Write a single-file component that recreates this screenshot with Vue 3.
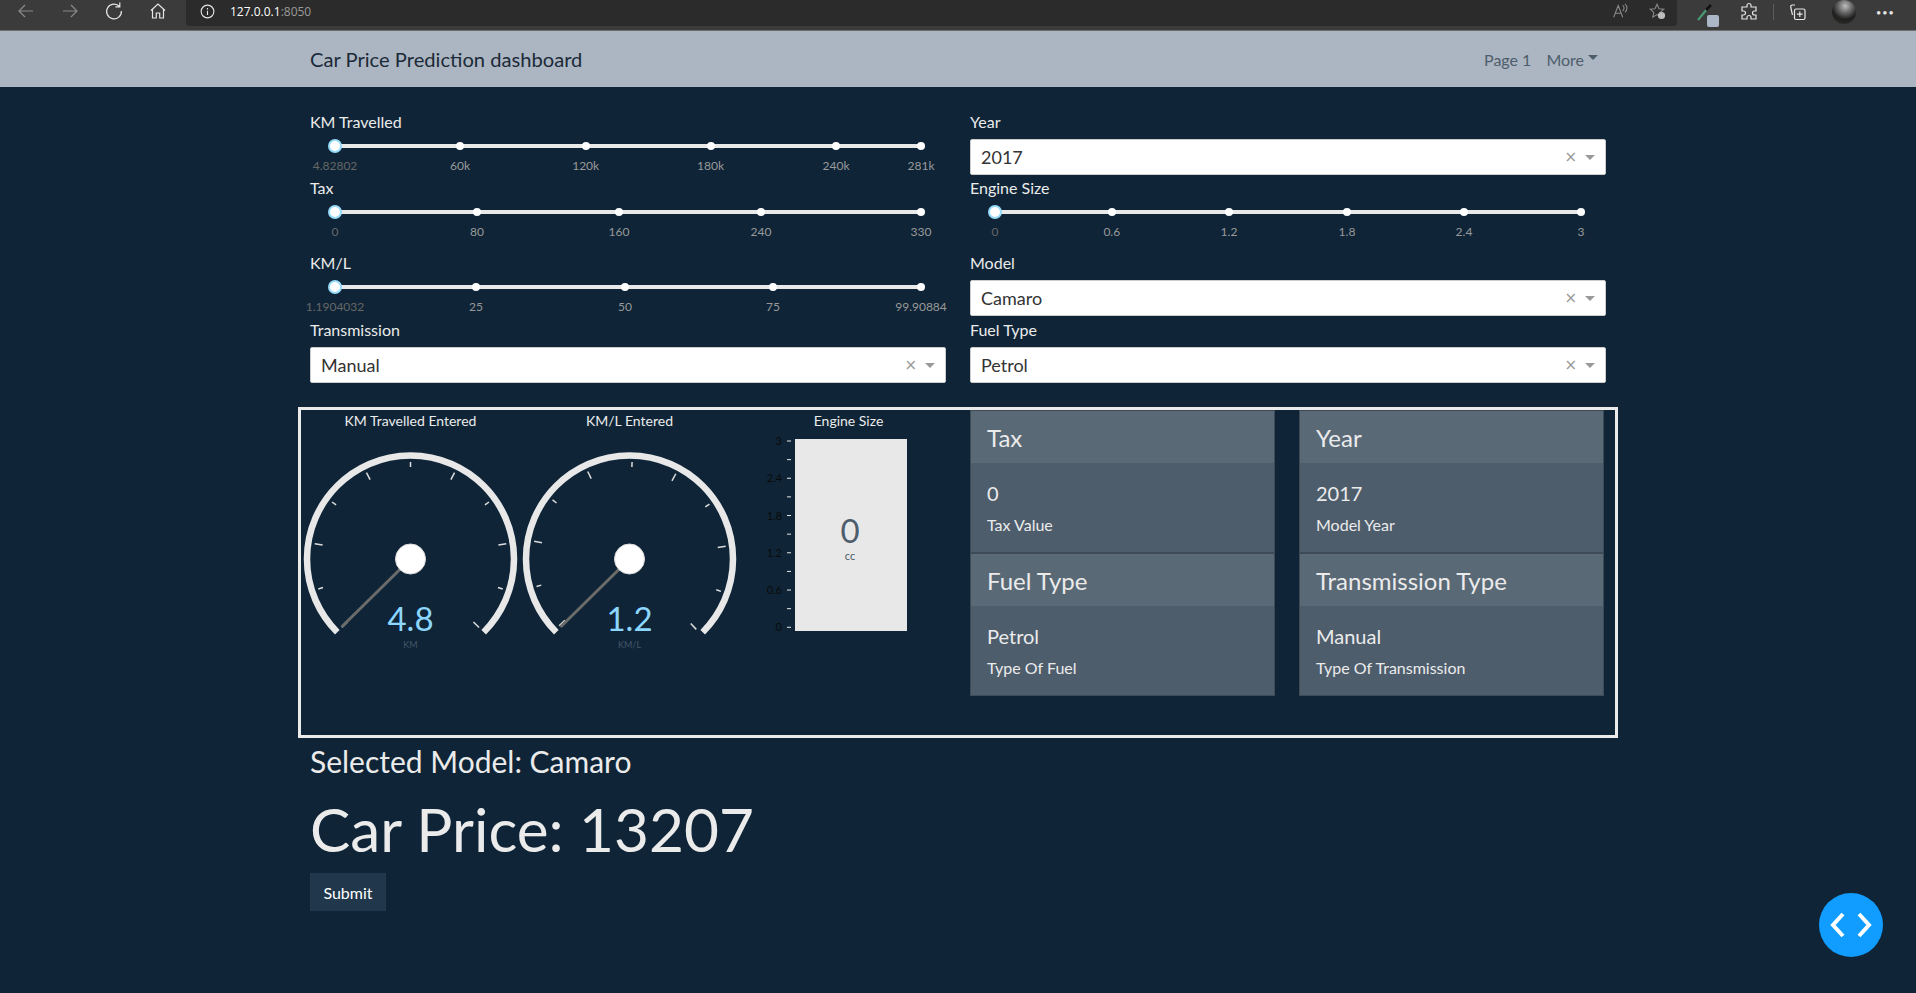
<template>
  <div class="page">
    <div class="browser">
      <div class="browser-nav">
        <svg class="bicon dim" viewBox="0 0 20 20"><path d="M17 10H3M9 4l-6 6 6 6" /></svg>
        <svg class="bicon dim" viewBox="0 0 20 20"><path d="M3 10h14M11 4l6 6-6 6" /></svg>
        <svg class="bicon" viewBox="0 0 20 20"><path d="M15.5 5.5A7.4 7.4 0 1 0 17.4 10M15.8 1.5v4.4h-4.4" /></svg>
        <svg class="bicon" viewBox="0 0 20 20"><path d="M3 9.5 10 3l7 6.5M4.500 8.500V17h3.800v-5h3.400v5h3.800V8.500" /></svg>
      </div>
      <div class="address">
        <svg class="info" viewBox="0 0 20 20"><circle cx="10" cy="10" r="7.500" /><path d="M10 9v5M10 6v1.500" /></svg>
        <span class="url"><b>127.0.0.1</b>:8050</span>
        <span class="grow"></span>
        <svg class="bicon small dim" viewBox="0 0 20 20"><path d="M3 17 8 4l5 13M5 12.500h6M13 3.500c2 1.500 2 5 0 6.500M15.500 2c3 2.500 3 7 0 9.500" /></svg>
        <svg class="bicon small dim star" viewBox="0 0 20 20"><path d="M10 2.500l2.200 5 5.300.5-4 3.500 1.200 5.300L10 14l-4.700 2.800 1.200-5.300-4-3.500 5.300-.5z" /><circle cx="15" cy="15" r="4" class="plus" /></svg>
      </div>
      <div class="browser-tools">
        <div class="dropper">
          <svg class="bicon" viewBox="0 0 20 20"><path class="green" d="M3 18 12 7" /><path class="dark" d="M11 8l5-5" /></svg>
          <i class="swatch"></i>
        </div>
        <svg class="bicon puzzle" viewBox="0 0 20 20"><path d="M8 3.500a2 2 0 0 1 4 0V5h5v4h-1.500a2 2 0 0 0 0 4H17v4h-5v-1.500a2 2 0 0 0-4 0V17H3v-4h1.500a2 2 0 0 0 0-4H3V5h5z" /></svg>
        <i class="sep"></i>
        <svg class="bicon" viewBox="0 0 20 20"><path d="M7 3H4.500C3 3 2.500 4 2.800 5.500L4.500 13M8 7h7.500A1.500 1.500 0 0 1 17 8.500V16a1.500 1.500 0 0 1-1.500 1.500H8A1.500 1.500 0 0 1 6.500 16V8.500A1.500 1.500 0 0 1 8 7zM11.800 9.500v5.500M9 12.200h5.500" /></svg>
        <i class="avatar"></i>
        <span class="dots">•••</span>
      </div>
    </div>

    <nav class="navbar">
      <div class="nav-inner">
        <span class="brand">Car Price Prediction dashboard</span>
        <div class="nav-links">
          <span>Page 1</span>
          <span class="more">More<i class="caret"></i></span>
        </div>
      </div>
    </nav>

    <main class="container">
      <section class="filters">
        <div v-for="f in filters" :key="f.label" class="field">
          <label class="field-label">{{ f.label }}</label>
          <div v-if="f.marks" class="slider">
            <div class="track"></div>
            <i v-for="m in f.marks" :key="m.text" class="dot" :style="{ left: m.pos + 'px' }"></i>
            <i class="handle"></i>
            <span
              v-for="(m, i) in f.marks"
              :key="m.text + 'x'"
              class="mark"
              :class="{ first: i === 0 }"
              :style="{ left: m.pos + 'px' }"
            >{{ m.text }}</span>
          </div>
          <div v-else class="select">
            <span class="select-value">{{ f.value }}</span>
            <span class="clear">×</span>
            <i class="arrow"></i>
          </div>
        </div>
      </section>

      <section class="result-box">
        <div class="gauges">
          <div v-for="g in gauges" :key="g.title" class="gauge">
            <div class="gauge-title">{{ g.title }}</div>
            <svg width="219" height="240" viewBox="0 0 219 240">
              <g transform="translate(109.500 128)">
                <path class="dial" :d="arcPath" />
                <g :transform="'rotate(' + g.tilt + ')'">
                  <line
                    v-for="t in ticks"
                    :key="t.deg"
                    class="tick"
                    :x1="t.x1" :y1="t.y1" :x2="t.x2" :y2="t.y2"
                  />
                </g>
                <line class="needle" x1="0" y1="0" x2="-69" y2="68" />
                <circle class="hub" r="15" />
                <text class="gauge-value" x="0" y="72">{{ g.value }}</text>
                <text class="gauge-unit" x="0" y="89">{{ g.unit }}</text>
              </g>
            </svg>
          </div>
          <div class="gauge">
            <div class="gauge-title">Engine Size</div>
            <svg width="219" height="240" viewBox="0 0 219 240">
              <g v-for="(t, i) in tankTicks" :key="i">
                <line class="tank-tick" x1="48" x2="52" :y1="t.y" :y2="t.y" />
                <text v-if="t.text" class="tank-scale" x="43" :y="t.y + 4">{{ t.text }}</text>
              </g>
              <rect class="tank" x="56" y="8" width="112" height="192" />
              <text class="tank-value" x="111" y="112">0</text>
              <text class="tank-unit" x="111" y="129">cc</text>
            </svg>
          </div>
        </div>
        <div class="cards">
          <div v-for="c in cards" :key="c.head" class="card">
            <div class="card-head">{{ c.head }}</div>
            <div class="card-body">
              <div class="card-value">{{ c.value }}</div>
              <div class="card-sub">{{ c.sub }}</div>
            </div>
          </div>
        </div>
      </section>

      <h3 class="selected">Selected Model: Camaro</h3>
      <h1 class="price">Car Price: 13207</h1>
      <button class="submit">Submit</button>
    </main>

    <button class="fab" aria-label="debug">
      <svg width="42" height="28" viewBox="0 0 42 28"><path d="M13 3 3 14l10 11M29 3l10 11-10 11" /></svg>
    </button>
  </div>
</template>

<script setup>
const marks = (pairs) => pairs.map(([text, pos]) => ({ text, pos }))

const filters = [
  { label: 'KM Travelled', marks: marks([['4.82802', 25], ['60k', 150], ['120k', 275.7], ['180k', 400.6], ['240k', 526], ['281k', 611]]) },
  { label: 'Year', value: '2017' },
  { label: 'Tax', marks: marks([['0', 25], ['80', 167], ['160', 309], ['240', 451], ['330', 611]]) },
  { label: 'Engine Size', marks: marks([['0', 25], ['0.6', 141.800], ['1.2', 259], ['1.8', 377], ['2.4', 494], ['3', 611]]) },
  { label: 'KM/L', marks: marks([['1.1904032', 25], ['25', 166], ['50', 315], ['75', 463], ['99.90884', 611]]) },
  { label: 'Model', value: 'Camaro' },
  { label: 'Transmission', value: 'Manual' },
  { label: 'Fuel Type', value: 'Petrol' }
]

const gauges = [
  { title: 'KM Travelled Entered', value: '4.8', unit: 'KM', tilt: 0 },
  { title: 'KM/L Entered', value: '1.2', unit: 'KM/L', tilt: 1.500 }
]

const polar = (r, deg) => {
  const a = (deg * Math.PI) / 180
  return [r * Math.sin(a), -r * Math.cos(a)]
}

const [ax, ay] = polar(103.500, -135)
const [bx, by] = polar(103.500, 135)
const arcPath = `M${ax} ${ay}A103.500 103.500 0 1 1 ${bx} ${by}`

// every other tick on the dial is longer, starting from the left end
const ticks = Array.from({ length: 11 }, (_, i) => {
  const deg = -135 + i * 27
  const [x1, y1] = polar(97, deg)
  const [x2, y2] = polar(i % 2 === 0 ? 89 : 92, deg)
  return { deg, x1, y1, x2, y2 }
})

const tankLabels = ['3', '', '2.4', '', '1.8', '', '1.2', '', '0.6', '', '0']
const tankTicks = tankLabels.map((text, i) => ({ text, y: 10 + i * 18.630 }))

const cards = [
  { head: 'Tax', value: '0', sub: 'Tax Value' },
  { head: 'Year', value: '2017', sub: 'Model Year' },
  { head: 'Fuel Type', value: 'Petrol', sub: 'Type Of Fuel' },
  { head: 'Transmission Type', value: 'Manual', sub: 'Type Of Transmission' }
]
</script>

<style>
html, body {
  background: #0f2537;
}
</style>

<style scoped>
.page {
  min-height: 993px;
  background: #0f2537;
  color: #ebebeb;
  font-family: Lato, "Open Sans", sans-serif;
  font-size: 15px;
  overflow: hidden;
}

/* browser chrome */
.browser {
  height: 30px;
  display: flex;
  background: #3b3b3b;
  border-bottom: 1px solid #6e6e6e;
}
.browser-nav {
  width: 186px;
  display: flex;
  align-items: center;
  gap: 24px;
  padding: 0 0 8px 16px;
  box-sizing: border-box;
}
.bicon {
  width: 20px;
  height: 20px;
  flex: none;
  fill: none;
  stroke: #e6e6e6;
  stroke-width: 1.200;
}
.bicon.dim {
  stroke: #8a8a8a;
}
.bicon.small {
  width: 18px;
  height: 18px;
}
.star {
  margin-left: 19px;
  margin-right: 11px;
}
.plus {
  fill: #bdbdbd;
  stroke: none;
}
.address {
  width: 1491px;
  height: 26px;
  display: flex;
  align-items: center;
  padding: 0 0 4px 13px;
  box-sizing: border-box;
  background: #2b2b2b;
  border-radius: 0 0 4px 4px;
}
.info {
  width: 17px;
  height: 17px;
  fill: none;
  stroke: #e6e6e6;
  stroke-width: 1.300;
}
.url {
  margin-left: 14px;
  font-family: "Open Sans", sans-serif;
  font-size: 12px;
  color: #9a9a9a;
}
.url b {
  font-weight: 400;
  color: #fff;
}
.grow {
  flex: 1;
}
.browser-tools {
  flex: 1;
  display: flex;
  align-items: center;
  padding: 0 0 6px 18px;
  gap: 14px;
}
.dropper {
  position: relative;
  width: 20px;
  height: 20px;
}
.green {
  stroke: #4c9a76;
  stroke-width: 2;
}
.dark {
  stroke: #111;
  stroke-width: 2.500;
}
.swatch {
  position: absolute;
  left: 12px;
  top: 13px;
  width: 12px;
  height: 12px;
  border-radius: 2px;
  background: #abb6c6;
}
.puzzle {
  margin-left: 10px;
}
.sep {
  width: 1px;
  height: 16px;
  background: #5c5c5c;
}
.avatar {
  width: 24px;
  height: 24px;
  margin: 0 0 0 10px;
  border-radius: 50%;
  background: radial-gradient(circle at 55% 25%, #bdbdbd 0, #6a6a6a 30%, #1e1e1e 60%, #3a3530 100%);
}
.dots {
  margin-left: 6px;
  font-size: 9px;
  letter-spacing: 1px;
  color: #e6e6e6;
}

/* navbar */
.navbar {
  height: 56px;
  background: #abb6c2;
}
.nav-inner {
  width: 1296px;
  height: 100%;
  margin: 0 auto;
  display: flex;
  align-items: center;
  justify-content: space-between;
}
.brand {
  font-size: 20.150px;
  color: #1c2a38;
}
.nav-links {
  display: flex;
  gap: 15px;
  margin-right: 8px;
  font-size: 16px;
  color: #4e5d6c;
}
.more {
  display: flex;
  align-items: center;
}
.caret {
  width: 0;
  height: 0;
  margin-left: 4px;
  margin-top: -3px;
  border: 5px solid transparent;
  border-top-color: #4e5d6c;
  border-bottom: 0;
}

/* filters */
.container {
  width: 1296px;
  margin: 0 auto;
  padding-top: 23px;
}
.filters {
  display: grid;
  grid-template-columns: 636px 636px;
  grid-template-rows: 66px 75px 67px 63px;
  column-gap: 24px;
}
.field-label {
  display: block;
  font-size: 16px;
  line-height: 24px;
  color: #ebebeb;
}
.slider {
  position: relative;
  height: 40px;
}
.track {
  position: absolute;
  left: 25px;
  right: 25px;
  top: 10px;
  height: 4px;
  border-radius: 2px;
  background: #e9e9e9;
}
.dot {
  position: absolute;
  top: 8px;
  width: 8px;
  height: 8px;
  margin-left: -4px;
  border-radius: 50%;
  background: #fff;
}
.handle {
  position: absolute;
  left: 18px;
  top: 5px;
  width: 14px;
  height: 14px;
  box-sizing: border-box;
  border: 2px solid #96dbfa;
  border-radius: 50%;
  background: #fff;
}
.mark {
  position: absolute;
  top: 24px;
  transform: translateX(-50%);
  font-size: 12px;
  line-height: 16px;
  white-space: nowrap;
  color: #999;
}
.mark.first {
  color: #666;
}
.select {
  height: 36px;
  margin-top: 5px;
  display: flex;
  align-items: center;
  padding: 0 10px;
  box-sizing: border-box;
  background: #fff;
  border: 1px solid #ccc;
  border-radius: 2px;
}
.select-value {
  flex: 1;
  font-size: 18px;
  color: #333;
}
.clear {
  font-family: "DejaVu Sans", sans-serif;
  font-size: 15px;
  color: #999;
  margin-right: 8px;
}
.arrow {
  width: 0;
  height: 0;
  border: 5px solid transparent;
  border-top-color: #999;
  border-bottom: 0;
}

/* gauges + cards box */
.result-box {
  width: 1320px;
  height: 331px;
  margin: 26px 0 0 -12px;
  box-sizing: border-box;
  display: grid;
  grid-template-columns: 657px 657px;
  border: 3px solid #ebebeb;
}
.gauges {
  display: grid;
  grid-template-columns: repeat(3, 219px);
}
.gauge-title {
  height: 21px;
  line-height: 22px;
  text-align: center;
  font-size: 14px;
  color: #ebebeb;
}
.gauge svg {
  display: block;
}
.dial {
  fill: none;
  stroke: #e8e8e8;
  stroke-width: 6.500;
}
.tick {
  stroke: #dcdcdc;
  stroke-width: 1.500;
}
.needle {
  stroke: #6b6b6b;
  stroke-width: 3;
}
.hub {
  fill: #fff;
  stroke: #ddd;
  stroke-width: 1;
}
.gauge-value {
  text-anchor: middle;
  font-size: 33px;
  fill: #8cd6ff;
}
.gauge-unit {
  text-anchor: middle;
  font-size: 9px;
  fill: #44566a;
}
.tank {
  fill: #e8e8e8;
}
.tank-tick {
  stroke: #e8e8e8;
  stroke-width: 1;
}
.tank-scale {
  text-anchor: end;
  font-size: 11px;
  fill: #0a0a0a;
}
.tank-value {
  text-anchor: middle;
  font-size: 33px;
  fill: #4e5d6c;
}
.tank-unit {
  text-anchor: middle;
  font-size: 11px;
  fill: #4e5d6c;
}
.cards {
  display: grid;
  grid-template-columns: 304.500px 304.500px;
  grid-auto-rows: 143px;
  column-gap: 24.500px;
  padding: 0 12px;
}
.card {
  background: #4e5d6c;
  border: 1px solid #3e4b57;
  box-sizing: border-box;
}
.card-head {
  height: 52px;
  line-height: 53px;
  padding: 0 16px;
  font-size: 24px;
  color: #ebebeb;
  background: #5a6976;
}
.card-body {
  padding: 18px 16px 0;
}
.card-value {
  font-size: 20px;
  line-height: 24px;
}
.card-sub {
  margin-top: 8px;
  font-size: 16px;
  line-height: 24px;
}

/* bottom */
.selected {
  margin: 5px 0 0;
  font-size: 30px;
  font-weight: 400;
  line-height: 36px;
  color: #ebebeb;
}
.price {
  margin: 14px 0 0;
  font-size: 60.300px;
  font-weight: 400;
  line-height: 72px;
  color: #ebebeb;
}
.submit {
  display: block;
  width: 76px;
  height: 38px;
  margin-top: 8px;
  padding: 0;
  border: 0;
  background: #20374c;
  color: #fff;
  font-family: inherit;
  font-size: 16px;
}
.fab {
  position: fixed;
  left: 1819px;
  top: 893px;
  width: 64px;
  height: 64px;
  display: flex;
  align-items: center;
  justify-content: center;
  padding: 0;
  border: 0;
  border-radius: 50%;
  background: #119dff;
}
.fab svg {
  fill: none;
  stroke: #fff;
  stroke-width: 4;
}
</style>
